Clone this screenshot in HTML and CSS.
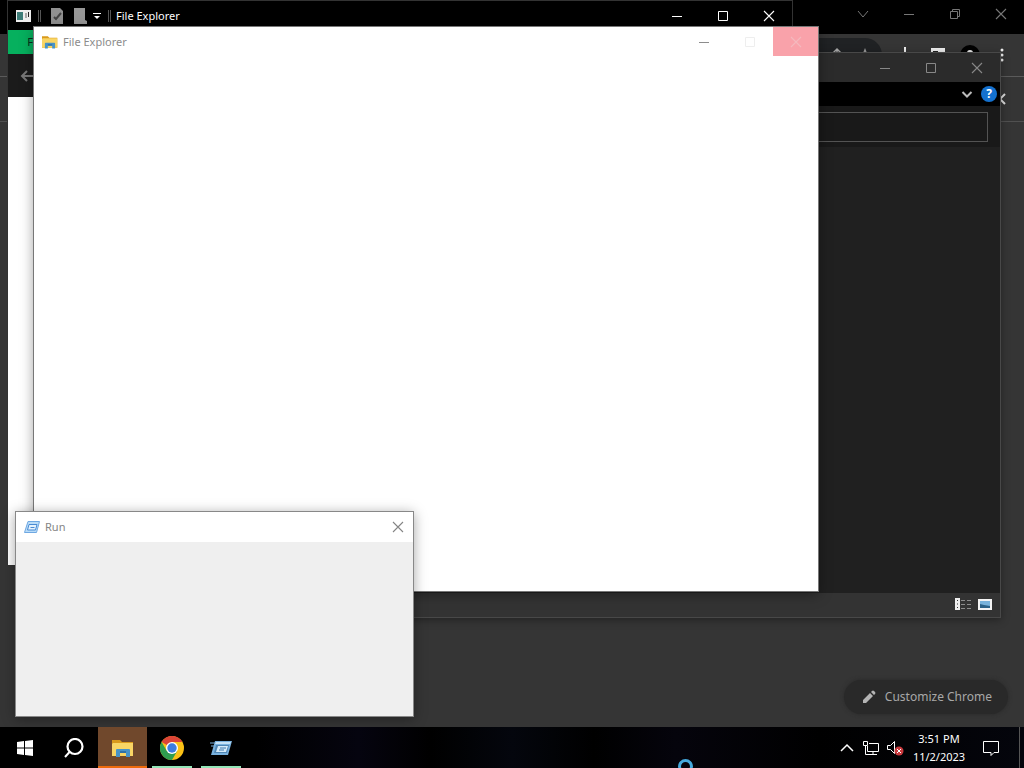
FILE: index.html
```html
<!DOCTYPE html>
<html lang="en">
<head>
<meta charset="utf-8">
<title>Desktop</title>
<link rel="stylesheet" href="styles.css">
</head>
<body>
<svg class="defs" aria-hidden="true">
  <symbol id="min" viewBox="0 0 12 12"><path d="M1 6.5h10" stroke="currentColor"/></symbol>
  <symbol id="max" viewBox="0 0 12 12"><path d="M1.5 1.5h9v9h-9z" fill="none" stroke="currentColor"/></symbol>
  <symbol id="close" viewBox="0 0 12 12"><path d="M1 1l10 10M11 1L1 11" stroke="currentColor" stroke-width="1.1"/></symbol>
  <symbol id="restore" viewBox="0 0 12 12"><path d="M1.5 3.5h7v7h-7zM3.500 3V1.500h7v7H9" fill="none" stroke="currentColor"/></symbol>
  <symbol id="down" viewBox="0 0 12 12"><path d="M1 3l5 6 5-6" fill="none" stroke="currentColor"/></symbol>
  <symbol id="folder" viewBox="0 0 22 18">
    <path d="M0 1h8l2 2h11v14H0z" fill="#d99a1c"/><path d="M1 4h20v13H0V5z" fill="#f8d565"/>
    <path d="M4 18v-7q0-1 1-1h12q1 0 1 1v7h-4v-4H8v4z" fill="#4793c8"/><path d="M8 12h6v2H8z" fill="#2f71a8"/>
  </symbol>
  <symbol id="run" viewBox="0 0 22 16">
    <path d="M5 1h17l-4 14H1z" fill="#79b2df"/><path d="M6 2h15l-1 2H5z" fill="#c6e2f6"/>
    <path d="M6 5h13l-2 8H4z" fill="#4f86b4"/><path d="M8 6h10l-2 6H6z" fill="#d5ebfa"/><path d="M10 8h6M9 10h5" stroke="#3c78ad"/>
    <path d="M0 3h5M1 6h3" stroke="#79b2df"/>
  </symbol>
  <symbol id="run-small" viewBox="0 0 16 12">
    <path d="M4 .500h11.500L12.500 11.500H.500z" fill="#b9dcf8" stroke="#6fa8e2"/>
    <path d="M5 3.500h8L11.500 9h-8z" fill="#e4f2fd" stroke="#4a8bd4"/><path d="M6.500 6.500h4" stroke="#4a8bd4"/>
  </symbol>
</svg>

<main class="desktop">
  <section class="browser" aria-label="Chrome">
    <header class="browser-title">
      <button class="caption" aria-label="Search tabs"><svg class="ico"><use href="#down"/></svg></button>
      <button class="caption" aria-label="Minimize"><svg class="ico"><use href="#min"/></svg></button>
      <button class="caption" aria-label="Restore"><svg class="ico"><use href="#restore"/></svg></button>
      <button class="caption" aria-label="Close"><svg class="ico"><use href="#close"/></svg></button>
    </header>
    <div class="browser-tools">
      <div class="omnibox">
        <button class="tool" aria-label="Share"><svg viewBox="0 0 16 16"><path d="M2 7v7h12V7M4 6l4-4 4 4M8 2v9" fill="none" stroke="#aaa" stroke-width="1.500"/></svg></button>
        <button class="tool" aria-label="Bookmark"><svg viewBox="0 0 16 16"><path d="M8 1l2 5h5l-4 3 2 6-5-3-5 3 2-6-4-3h5z" fill="#999"/></svg></button>
      </div>
      <button class="tool" aria-label="Downloads"><svg viewBox="0 0 16 16"><path d="M7 0v12M3 8l4 5 4-5" fill="none" stroke="#eee" stroke-width="2"/></svg></button>
      <button class="tool" aria-label="Side panel"><svg viewBox="0 0 16 16"><path d="M1 1h14v13H1z" fill="#eee"/><path d="M3 4h5v8H3z" fill="#222"/></svg></button>
      <button class="tool profile" aria-label="Profile"><svg viewBox="0 0 20 20"><circle cx="10" cy="10" r="10" fill="#000"/><circle cx="10" cy="8" r="3" fill="#eee"/><path d="M4 17q6-9 12 0z" fill="#eee"/></svg></button>
      <button class="tool" aria-label="Menu"><svg viewBox="0 0 16 16"><g fill="#eee"><circle cx="8" cy="3" r="1.500"/><circle cx="8" cy="8" r="1.500"/><circle cx="8" cy="13" r="1.500"/></g></svg></button>
    </div>
    <div class="browser-marks"><button class="tool" aria-label="More bookmarks"><svg viewBox="0 0 16 16"><path d="M10 3L5 8l5 5" fill="none" stroke="#ddd" stroke-width="2"/></svg></button></div>
    <div class="browser-page">
      <button class="customize"><svg viewBox="0 0 14 14"><path d="M1 13v-3l7-7 3 3-7 7zM9 2l1-1q1-1 2 0l1 1q1 1 0 2l-1 1z" fill="#b4b4b4"/></svg>Customize Chrome</button>
    </div>
  </section>

  <section class="window dark-window" aria-label="Folder">
    <header class="bar dark-title">
      <button class="caption" aria-label="Minimize"><svg class="ico"><use href="#min"/></svg></button>
      <button class="caption" aria-label="Maximize"><svg class="ico"><use href="#max"/></svg></button>
      <button class="caption" aria-label="Close"><svg class="ico"><use href="#close"/></svg></button>
    </header>
    <div class="ribbon">
      <button class="tool" aria-label="Expand ribbon"><svg viewBox="0 0 16 16"><path d="M3.500 6L8 10.500 12.500 6" fill="none" stroke="#bbb" stroke-width="2"/></svg></button>
      <button class="help" aria-label="Help">?</button>
    </div>
    <div class="address"><input class="search" type="text" aria-label="Search"></div>
    <div class="files"></div>
    <footer class="status">
      <button class="tool" aria-label="Details view"><svg viewBox="0 0 16 14"><path d="M0 1h5v12H0z" fill="#eee"/><path d="M2 3h1v1H2zM2 6.500h1v1H2zM2 10h1v1H2z" fill="#333"/><path d="M6 3.500h4M12 3.500h4M6 7.500h4M12 7.500h4M6 11.500h4M12 11.500h4" stroke="#8c8c8c"/></svg></button>
      <button class="tool" aria-label="Large icons"><svg viewBox="0 0 16 14"><path d="M1 2h14v11H1z" fill="#f4f4f4"/><path d="M3 4h10v7H3z" fill="#79b3dc"/><path d="M3 7l4 1 6 1v2H3z" fill="#2c6288"/></svg></button>
    </footer>
  </section>

  <section class="window black-window" aria-label="File Explorer">
    <header class="bar black-title">
      <svg class="app" viewBox="0 0 16 14"><path d="M0 1h15v12H0z" fill="#eee"/><path d="M1 3h6v8H1z" fill="#3d7d78"/><path d="M9 4h2v5H9z" fill="#aaa"/><path d="M12.500 3v5" stroke="#222"/></svg>
      <i class="rule"></i>
      <button class="tool" aria-label="Properties"><svg viewBox="0 0 14 16"><path d="M1 0h9l3 3v13H1z" fill="#909090"/><path d="M4 9l2 2 5-6" fill="none" stroke="#444" stroke-width="2"/></svg></button>
      <button class="tool" aria-label="New folder"><svg viewBox="0 0 14 16"><path d="M1 0h11v12l2 1v3H1z" fill="#989898"/></svg></button>
      <button class="tool more" aria-label="Customize toolbar"><svg viewBox="0 0 8 8"><path d="M0 .500h8" stroke="#fff"/><path d="M1 3h6L4 6z" fill="#fff"/></svg></button>
      <i class="rule"></i>
      <h2 class="title">File Explorer</h2>
      <button class="caption" aria-label="Minimize"><svg class="ico"><use href="#min"/></svg></button>
      <button class="caption" aria-label="Maximize"><svg class="ico"><use href="#max"/></svg></button>
      <button class="caption" aria-label="Close"><svg class="ico"><use href="#close"/></svg></button>
    </header>
    <div class="tabs"><button class="file-tab">File</button></div>
    <div class="nav"><button class="tool" aria-label="Back"><svg viewBox="0 0 14 14"><path d="M14 7H2M7 2L2 7l5 5" fill="none" stroke="#777" stroke-width="2"/></svg></button></div>
    <div class="blank"></div>
  </section>

  <section class="window white-window" aria-label="File Explorer">
    <header class="bar white-title">
      <svg class="app"><use href="#folder"/></svg>
      <h2 class="title">File Explorer</h2>
      <button class="caption" aria-label="Minimize"><svg class="ico"><use href="#min"/></svg></button>
      <button class="caption faint" aria-label="Maximize"><svg class="ico"><use href="#max"/></svg></button>
      <button class="caption hot" aria-label="Close"><svg class="ico"><use href="#close"/></svg></button>
    </header>
  </section>

  <section class="window run-window" aria-label="Run">
    <header class="bar run-title">
      <svg class="app"><use href="#run-small"/></svg>
      <h2 class="title">Run</h2>
      <button class="caption" aria-label="Close"><svg class="ico"><use href="#close"/></svg></button>
    </header>
  </section>
</main>

<footer class="taskbar">
  <button class="task" aria-label="Start"><svg class="win" viewBox="0 0 16 16"><path d="M0 2l7-1v6.500H0zM8 1l8-1v7.500H8zM0 8.500h7V15l-7-1zM8 8.500h8V16l-8-1z" fill="#fff"/></svg></button>
  <button class="task" aria-label="Search"><svg class="glass" viewBox="0 0 20 20"><circle cx="11" cy="8.500" r="7.500" fill="none" stroke="#fff" stroke-width="2.200"/><path d="M6 13.500L1 19" stroke="#fff" stroke-width="2"/></svg></button>
  <button class="task alert" aria-label="File Explorer"><svg class="big"><use href="#folder"/></svg></button>
  <button class="task open" aria-label="Chrome"><svg class="chrome" viewBox="0 0 24 24"><circle cx="12" cy="12" r="12" fill="#fbc116"/><path d="M12 12L1.600 6A12 12 0 0 1 22.400 6H12z" fill="#dc4437"/><path d="M1.600 6A12 12 0 0 0 12 24l5.200-9L12 12 6.800 15z" fill="#2f9e4f"/><circle cx="12" cy="12" r="6" fill="#fff"/><circle cx="12" cy="12" r="4.700" fill="#3d7de0"/></svg></button>
  <button class="task open" aria-label="Run"><svg class="big"><use href="#run"/></svg></button>
  <div class="tray">
    <button class="tool" aria-label="Show hidden icons"><svg viewBox="0 0 16 16"><path d="M2 11l6-6 6 6" fill="none" stroke="#fff" stroke-width="1.500"/></svg></button>
    <button class="tool net" aria-label="Network"><svg viewBox="0 0 18 16"><path d="M7 3.500h9.500v8H5.500V6M11 12v3M7 14.500h8M1.500 1.500h4v4h-4zM3.500 6v8.500h4" fill="none" stroke="#fff"/></svg></button>
    <button class="tool net" aria-label="Volume muted"><svg viewBox="0 0 18 16"><path d="M1.500 5.500h3l4-4v12l-4-4h-3z" fill="none" stroke="#fff"/><circle cx="13" cy="11" r="4.500" fill="#c93a3e"/><path d="M11 9l4 4M15 9l-4 4" stroke="#fff"/></svg></button>
    <time class="clock" datetime="2023-11-02T15:51"><span>3:51 PM</span><span>11/2/2023</span></time>
    <button class="tool note" aria-label="Notifications"><svg viewBox="0 0 18 18"><path d="M1.500 2.500h15v11H12l-3 3v-3H1.500z" fill="none" stroke="#fff"/></svg></button>
    <i class="peek"></i>
  </div>
</footer>
<i class="busy"></i>
</body>
</html>
```

FILE: styles.css
```css
* { box-sizing: border-box; }
body {
  margin: 0;
  height: 100vh;
  display: flex;
  flex-direction: column;
  overflow: hidden;
  background: #000;
  font: 11px/16px "Noto Sans", "Open Sans", sans-serif;
}
button { display: flex; align-items: center; justify-content: center; border: 0; padding: 0; background: none; color: inherit; font: inherit; }
svg { display: block; flex: none; }
.defs { position: absolute; width: 0; height: 0; }
.desktop { position: relative; flex: 1; display: flex; overflow: hidden; }
.caption { width: 46px; height: 100%; flex: none; }
.ico { width: 12px; height: 12px; }
.tool { width: 16px; height: 16px; flex: none; }
.tool svg { width: 100%; height: 100%; }

.browser { flex: 1; display: flex; flex-direction: column; background: #353535; }
.browser-title { height: 34px; display: flex; justify-content: flex-end; padding-bottom: 6px; background: #000; color: #777; }
.browser-tools { height: 43px; display: flex; align-items: center; justify-content: flex-end; gap: 16px; padding-right: 14px; border-bottom: 1px solid #5a5a5a; }
.browser-tools .profile { width: 20px; height: 20px; margin: 0 -2px; }
.omnibox { width: 480px; height: 34px; display: flex; align-items: center; justify-content: flex-end; gap: 12px; padding-right: 9px; border-radius: 17px; background: #202224; }
.browser-marks { height: 45px; display: flex; align-items: center; justify-content: flex-end; padding-right: 13px; border-bottom: 1px solid #505050; }
.browser-page { flex: 1; display: flex; align-items: flex-end; justify-content: flex-end; padding: 13px 16px; }
.customize { height: 34px; gap: 9px; padding: 0 16px 0 18px; border-radius: 17px; background: #292929; color: #a8a8a8; font-size: 12px; box-shadow: 0 0 4px #292929; }
.customize svg { width: 14px; height: 14px; }

.window { position: absolute; width: 786px; height: 566px; display: flex; flex-direction: column; border: 1px solid #444; }
.bar { display: flex; align-items: center; flex: none; height: 29px; }
.title { flex: 1; margin: 0; font-size: 11px; font-weight: 400; }

.dark-window { left: 215px; top: 52px; background: #202020; border-color: #484848; box-shadow: 0 2px 8px rgba(0, 0, 0, .35); }
.dark-title { justify-content: flex-end; background: #2b2b2b; color: #888; }
.ribbon { height: 24px; display: flex; align-items: center; justify-content: flex-end; gap: 6px; padding-right: 3px; background: #000; }
.help { width: 16px; height: 16px; border-radius: 50%; background: #1471cf; color: #fff; font-size: 12px; font-weight: 700; }
.address { padding: 6px 12px 5px; background: #191919; }
.search { display: block; width: 100%; height: 30px; border: 1px solid #535353; background: #191919; color: #fff; }
.files { flex: 1; }
.status { height: 24px; display: flex; align-items: center; justify-content: flex-end; gap: 6px; padding: 0 7px 2px 0; background: #333; }

.black-window { left: 7px; top: 0; background: #fff; border-color: #333; }
.black-title { background: #000; color: #fff; padding-left: 8px; }
.black-title .app { width: 16px; height: 14px; margin-right: 6px; }
.black-title .tool { width: 14px; margin-left: 9px; }
.black-title .more { width: 8px; height: 8px; margin: 2px 7px 0 6px; }
.rule { width: 3px; height: 12px; border: solid #555; border-width: 0 1px; }
.black-title .title { padding-left: 5px; }
.tabs { height: 24px; flex: none; display: flex; background: #000; }
.file-tab { width: 56px; height: 24px; background: #06b05e; color: #0a2c1a; }
.nav { height: 43px; flex: none; display: flex; align-items: center; padding-left: 12px; background: #1b1b1b; }
.nav .tool { width: 14px; height: 14px; }
.blank { flex: 1; }

.white-window { left: 33px; top: 26px; background: #fff; border-color: #777; box-shadow: 0 3px 12px rgba(0, 0, 0, .35); }
.white-title { color: #8c8c8c; padding-left: 8px; }
.white-title .app { width: 16px; height: 14px; margin-right: 5px; }
.faint { color: #eee; }
.hot { width: 45px; background: #f9a2aa; color: #f4b9be; }

.run-window { left: 15px; top: 511px; width: 399px; height: 206px; background: #efefef; border-color: #888; box-shadow: 0 2px 12px rgba(0, 0, 0, .35); }
.run-title { height: 30px; padding-left: 8px; background: #fff; color: #858585; }
.run-title .app { width: 16px; height: 12px; margin-right: 5px; }
.run-title .caption { width: 30px; }

.taskbar { height: 41px; flex: none; display: flex; background: linear-gradient(90deg, #000 0 25%, #05040f 35%, #000 42%, #04060d 50%, #000 58%, #05040c 66%, #000 80%, #04050c); color: #fff; }
.task { width: 49px; flex: none; border: solid transparent; border-width: 2px 0; }
.win { width: 16px; height: 16px; }
.glass { width: 20px; height: 20px; }
.big { width: 22px; height: 18px; }
.chrome { width: 24px; height: 24px; }
.alert { background: #70482c; border-bottom-color: #ee6a0c; }
.open { background: linear-gradient(#93e5b7, #93e5b7) center bottom / 40px 2px no-repeat border-box; }
.tray { flex: 1; display: flex; align-items: center; justify-content: flex-end; }
.tray .net { width: 18px; margin-left: 6px; }
.tray .tool:first-child { margin-right: 1px; }
.clock { display: flex; flex-direction: column; width: 70px; align-items: center; line-height: 18px; }
.tray .note { width: 18px; height: 18px; margin: 0 19px 0 8px; }
.peek { width: 1px; height: 100%; margin-right: 4px; background: #555; }
.busy { position: absolute; left: 678px; bottom: -6px; width: 15px; height: 15px; border: 3px solid #45a9dd; border-radius: 50%; }
```
